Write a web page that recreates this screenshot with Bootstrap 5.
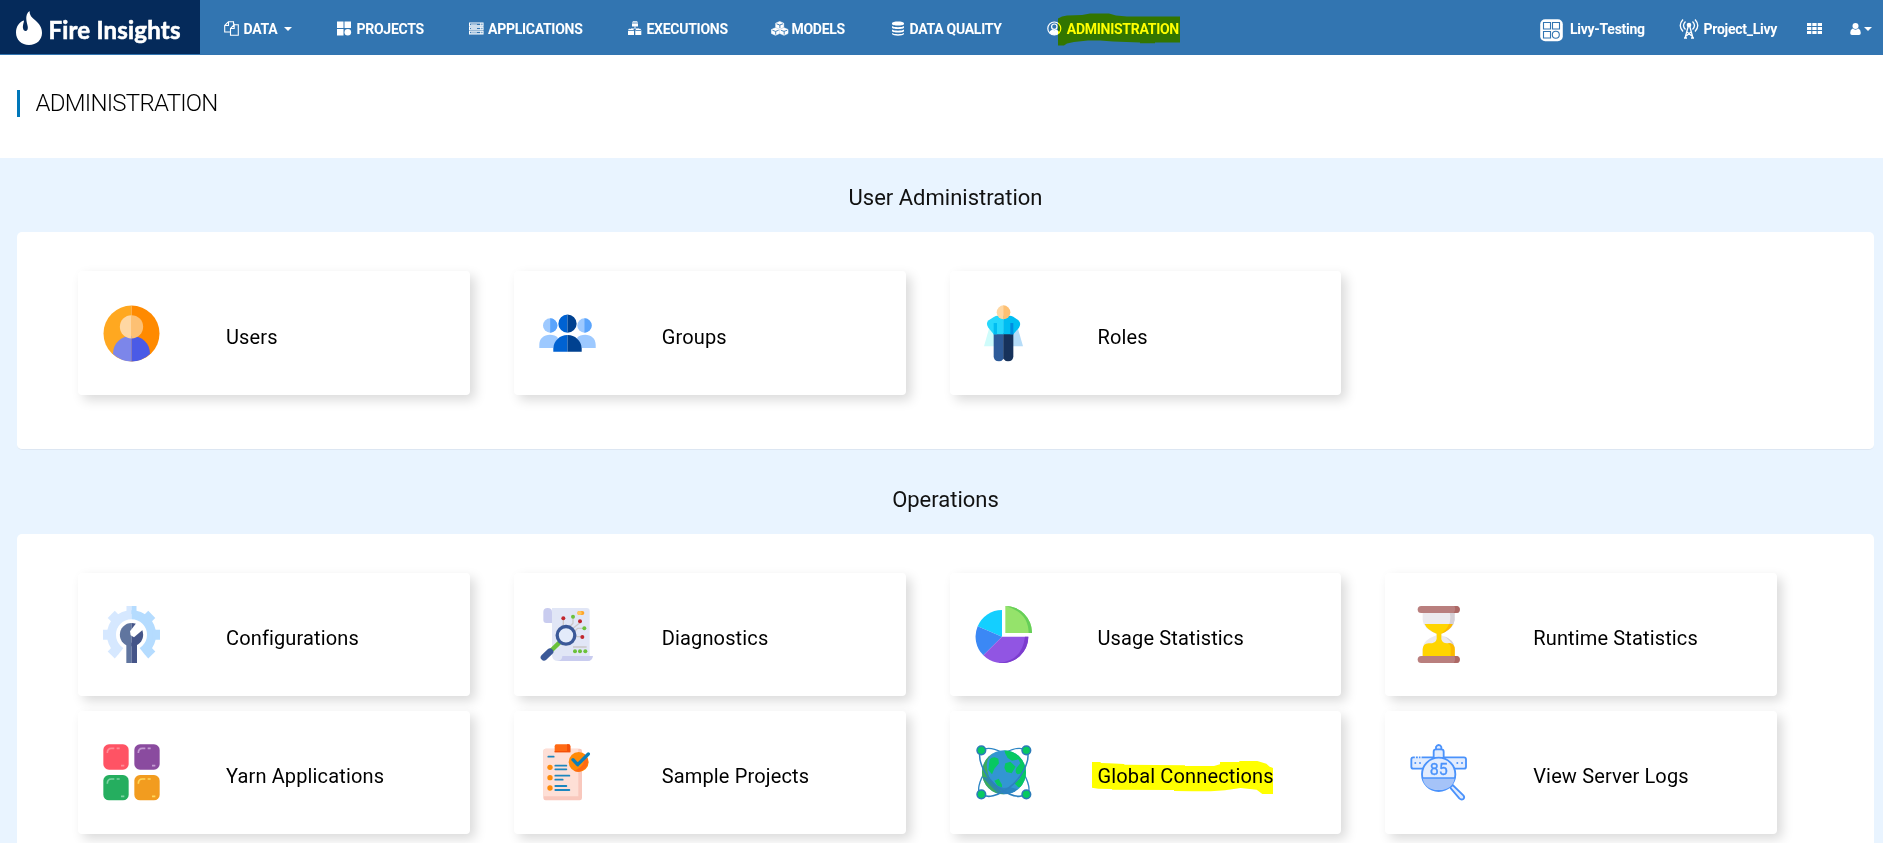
<!DOCTYPE html>
<html lang="en">
<head>
<meta charset="utf-8">
<meta name="viewport" content="width=device-width, initial-scale=1">
<title>Fire Insights - Administration</title>
<link href="https://cdn.jsdelivr.net/npm/bootstrap@5.3.0/dist/css/bootstrap.min.css" rel="stylesheet">
<style>
body{font-family:Roboto,sans-serif;background:#e9f4ff;color:#111;overflow:hidden}
svg{display:block;flex:none}
.topbar{height:55px;background:#3275b1;padding:0}
.brandbox{width:200px;height:54px;background:#052a5a;padding-left:15px;padding-top:2px;align-self:flex-start;color:#fff;text-decoration:none}
.brandname{font:700 24px/30px Lato,sans-serif;-webkit-text-stroke:.6px #fff;letter-spacing:.2px;margin-left:5.500px;margin-top:4px}
.mainmenu{display:grid;grid-template-columns:113px 131.5px 159.5px 143px 121px 155px auto;margin-left:24px;height:55px;align-items:center}
.topbar .nav-link{color:#fff;font-weight:700;font-size:14px;line-height:18px;letter-spacing:-.27px;padding:3px 0 0;display:flex;align-items:center;white-space:nowrap}
.topbar .nav-link>svg:not(.marker){fill:#fff;margin-top:-1px}
.caret{border:4px solid transparent;border-top-color:#fff;border-bottom:0;margin-left:7px}
.marker{position:absolute;mix-blend-mode:multiply;fill:#ff0;pointer-events:none}
.pagehead{height:103px;background:#fff;padding:35px 0 0 17px}
.pagehead h1{font-size:24px;font-weight:300;line-height:27px;height:27px;border-left:3px solid #0077b9;padding-left:15.500px;letter-spacing:-.75px;margin:0;color:#000}
.content{padding:0 9px 0 17px}
.content h2{font-size:22px;font-weight:400;line-height:24px;margin:0;text-align:center;padding:28px 0 22px}
.panel{background:#fff;border-radius:5px;padding:39px 97px 0 61px;border-bottom:1px solid #dce6f2}
.panel-a{height:218px}
.panel-b{height:309px;border-bottom:0;border-radius:5px 5px 0 0}
.tiles{--bs-gutter-x:44px;--bs-gutter-y:15px}
.tile{height:123px;border:0;border-radius:4px;background:#fff;box-shadow:5px 5px 12px rgba(0,0,0,.15);display:flex;flex-direction:row;align-items:center;padding-left:25px}
.panel-a .tile{height:124px;padding-top:1px}
.tile>svg{width:57px;height:57px}
.tile .cap{position:relative;font-size:20px;line-height:24px;letter-spacing:.14px;color:#000;margin:7px 0 0 66px}
</style>
</head>
<body>
<nav class="topbar navbar navbar-expand flex-nowrap justify-content-start">
  <a class="brandbox d-flex align-items-center" href="#">
    <svg width="28" height="36" viewBox="0 0 28 36"><path fill="#fff" d="M14.5 1C9.500 5 11.500 11 12.500 15.500C13.300 18.500 12.500 21 10.500 21C8.500 21 7.500 18 8 15.500C8.300 13.500 9 12 9 10.500C4.500 11.500 1 16.500 1 22.500C1 30 6.500 35 14 35C21.500 35 27 30 27 23C27 17 24 13.500 20.500 10.500C16.500 7.500 14.500 5 14.500 1Z"/></svg>
    <span class="brandname">Fire Insights</span>
  </a>
  <div class="mainmenu">
    <a class="nav-link" href="#"><svg width="19.500" height="15" viewBox="0 0 19.5 15"><path d="M4.500 3.500V.7H9.500V3.500M4.500.7L.7 4.500V11H6M4.500.7V4.500H.7M10.200 3.700H14.300V14.300H6.500V7.500L10.200 3.700V7.500H6.500" fill="none" stroke="#fff" stroke-width="1.100"/></svg>DATA<i class="caret"></i></a>
    <a class="nav-link" href="#"><svg width="19.500" height="15" viewBox="0 0 19.5 15"><path d="M0 .5H6.500V7H0zM7.500.5H14V7H7.500zM0 8H6.500V14.500H0z"/><circle cx="10.800" cy="11.200" r="3.300"/></svg>PROJECTS</a>
    <a class="nav-link" href="#"><svg width="19.500" height="13" viewBox="0 0 19.5 13"><path d="M.5 1H14V3.700H.5zM.5 5.100H14V7.800H.5zM.5 9.200H14V11.900H.5z" fill="none" stroke="#fff" stroke-width="1.100"/><path d="M2 2H8V2.800H2zM2 6.100H8V6.900H2zM2 10.200H8V11H2zM11 1H12.500V3.700H11zM11 5H12.500V7.800H11zM11 9.200H12.500V12H11z" opacity=".75"/></svg>APPLICATIONS</a>
    <a class="nav-link" href="#"><svg width="18.500" height="15" viewBox="0 0 18.5 15"><path d="M4 1.500L5 .3H9L10 1.500V5.500H4zM0 9L1 7.800H5L6 9V14H0zM7.300 9L8.300 7.800H12.300L13.300 9V14H7.300z"/><path d="M7 5V7M2 7H11.500M4 2H10M0 9.500H6M7.300 9.500H13.300" stroke="#3275b1" stroke-width=".8"/><path d="M6.500 5H7.500V7H11V7.600H3V7H6.500z"/></svg>EXECUTIONS</a>
    <a class="nav-link" href="#"><svg width="20.500" height="15" viewBox="0 0 20.5 15"><g stroke="#fff" stroke-width=".6" stroke-linejoin="round"><path d="M8.700.5L12.700 2.200V6.200L8.700 8L4.700 6.200V2.200zM4.500 6.800L8.500 8.500V12.500L4.500 14.300L.5 12.500V8.500zM13 6.800L17 8.500V12.500L13 14.300L9 12.500V8.500z"/></g><path d="M5.500 2.800L8.700 4L12 2.800M8.900 4V7M1.400 9.200L4.500 10.400L7.700 9.200M4.700 10.400V13.500M9.900 9.200L13 10.400L16.200 9.200M13.200 10.400V13.500" fill="none" stroke="#3275b1" stroke-width=".9"/></svg>MODELS</a>
    <a class="nav-link" href="#"><svg width="17.500" height="15" viewBox="0 0 17.5 15"><path d="M0 2.300C0-.2 12 -.2 12 2.300V3C12 5 0 5 0 3zM0 5C2 6.600 10 6.600 12 5V6.500C12 8.500 0 8.500 0 6.500zM0 8.500C2 10.100 10 10.100 12 8.500V10C12 12 0 12 0 10zM0 12C2 13.600 10 13.600 12 12V13C11 15.300 1 15.300 0 13z"/></svg>DATA QUALITY</a>
    <a class="nav-link position-relative" href="#"><svg width="19.800" height="15" viewBox="0 0 19.8 15"><circle cx="7.300" cy="7.500" r="6.500" fill="none" stroke="#fff" stroke-width="1.200"/><circle cx="7.300" cy="5.700" r="2.700" fill="none" stroke="#fff" stroke-width="1.200"/><path d="M2.300 11.500C3 9.500 4.500 9.200 5.300 8.500Q7.300 10 9.300 8.500C10 9.200 11.600 9.500 12.300 11.500Q7.300 16.500 2.300 11.500z"/></svg>ADMINISTRATION
      <svg class="marker" style="left:11px;top:-4px" width="123" height="33" viewBox="1058 13.500 123 33"><path d="M1058 19L1062 17L1067 16L1082 15.500L1090 14H1109L1116 16L1127 17H1180V43H1155V43.700H1140V43L1113 42L1100 41H1088L1074 42.500L1067 44L1064 46H1058z"/></svg></a>
  </div>
  <div class="d-flex ms-auto align-items-center" style="height:55px">
    <a class="nav-link" style="width:139px" href="#"><svg width="30" height="23" viewBox="0 0 30 23" style="margin-top:3px"><rect x=".2" y=".2" width="22.600" height="22" rx="5"/><g fill="none" stroke="#3275b1" stroke-width="1.100"><path d="M3.500 3.500H10.500V10H3.500zM12.500 3.500H19.500V10H12.500zM3.500 12.500H10.500V19H3.500z"/><circle cx="15.800" cy="15.700" r="3.500"/></g></svg>Livy-Testing</a>
    <a class="nav-link" style="width:128px" href="#"><svg width="24.500" height="21" viewBox="0 0 24.5 21"><path d="M4 1.500Q-1.500 7.500 4 13.500M16 1.500Q21.500 7.500 16 13.500M6.500 3.500Q2.500 7.500 6.500 11.500M13.500 3.500Q17.500 7.500 13.500 11.500M9.300 8L6.200 19.500M10.700 8L13.800 19.500M8 14L13.500 18.500M12 14L6.500 18.500M5 20H8M12 20H15" fill="none" stroke="#fff" stroke-width="1.300"/><circle cx="10" cy="7" r="2.300"/></svg>Project_Livy</a>
    <a class="nav-link" style="width:43px" href="#"><svg width="15" height="11" viewBox="0 0 15 11"><path d="M0 0H4.300V3H0zM5.300 0H9.600V3H5.300zM10.700 0H15V3H10.700zM0 4H4.300V7H0zM5.300 4H9.600V7H5.300zM10.700 4H15V7H10.700zM0 8H4.300V11H0zM5.300 8H9.600V11H5.300zM10.700 8H15V11H10.700z"/></svg></a>
    <a class="nav-link" style="width:33px" href="#"><svg width="11" height="12" viewBox="0 0 11 12"><circle cx="5.500" cy="3" r="3"/><path d="M2.500 5.500Q5.500 7.800 8.500 5.500Q10.800 6.500 10.800 10Q10.800 12 9 12H2Q.2 12 .2 10Q.2 6.500 2.500 5.500z"/></svg><i class="caret" style="margin-left:2.500px"></i></a>
  </div>
</nav>

<header class="pagehead"><h1>ADMINISTRATION</h1></header>

<main class="content">
  <h2>User Administration</h2>
  <section class="panel panel-a">
    <div class="row tiles">
      <div class="col-3"><div class="card tile">
        <svg viewBox="0 0 57 57"><path fill="#ffa820" d="M28.500.5A28 28 0 0 0 28.500 56.500z"/><path fill="#ff8a00" d="M28.500.5A28 28 0 0 1 28.500 56.500z"/><path fill="#7c86ea" d="M28.500 31C18 31 10 38 10 49A28 28 0 0 0 28.500 56.500z"/><path fill="#4a5ae6" d="M28.500 31C39 31 47 38 47 49A28 28 0 0 1 28.500 56.500z"/><path fill="#fed7a3" d="M28.500 10.200A11.600 11.600 0 0 0 28.500 33.500z"/><path fill="#fdc073" d="M28.500 10.200A11.600 11.600 0 0 1 28.500 33.500z"/></svg>
        <span class="cap">Users</span></div></div>
      <div class="col-3"><div class="card tile">
        <svg viewBox="0 0 57 57"><g fill="#9dc9ff"><path d="M.3 43V40C.3 33.500 5 29.800 10.800 29.800C14 29.800 17.500 31 19 33L14 43zM56.700 43V40C56.700 33.500 52 29.800 46.200 29.800C43 29.800 39.500 31 38 33L43 43z"/><circle cx="11.200" cy="20.500" r="7.200"/><circle cx="45.500" cy="20.500" r="7.200"/></g><path fill="#5aa4fc" d="M11.200 13.300A7.200 7.200 0 0 1 11.200 27.700zM45.500 13.300A7.200 7.200 0 0 1 45.500 27.700z"/><path fill="#0062d2" d="M28.500 9.500A9 9 0 0 0 28.500 27.800zM28.500 30A14 14 0 0 0 14.300 43V46.700H28.500z"/><path fill="#004190" d="M28.500 9.500A9 9 0 0 1 28.500 27.800zM28.500 30A14 14 0 0 1 42.700 43V46.700H28.500z"/></svg>
        <span class="cap">Groups</span></div></div>
      <div class="col-3"><div class="card tile">
        <svg viewBox="225 134 171 171"><path fill="#cffcfb" d="M267 205L252 258H290V205z"/><path fill="#b6dcf8" d="M354 205L369 258H330V205z"/><path fill="#2e5b99" d="M281 218H311V295Q305 303 297 303Q281 303 281 288z"/><path fill="#17325b" d="M340 218H310V295Q316 303 324 303Q340 303 340 288z"/><path fill="#26d8fc" d="M311 166H292Q284 166 266 180Q256 189 265 202L281 222H311z"/><path fill="#00bdf2" d="M310 166H330Q338 166 355 180Q365 189 357 202L340 222H310z"/><path fill="#00bdf2" d="M281 188H291V222H281z"/><path fill="#008de0" d="M331 188H340V222H331z"/><path fill="#fed7a3" d="M311 135A21 21 0 0 0 311 177z"/><path fill="#fdc073" d="M310 135A21 21 0 0 1 310 177z"/></svg>
        <span class="cap">Roles</span></div></div>
    </div>
  </section>

  <h2 style="padding-top:38px">Operations</h2>
  <section class="panel panel-b">
    <div class="row tiles">
      <div class="col-3"><div class="card tile">
        <svg viewBox="-1 0 171 171"><defs><clipPath id="gl"><path d="M-1 0H84.500V171H-1z"/></clipPath><clipPath id="gr"><path d="M84.500 0H171V171H84.500z"/></clipPath>
        <g id="gear"><circle cx="84.500" cy="86" r="60" fill="none" stroke-width="27"/><g stroke="none"><path d="M69.500 0h30v24h-30z"/><path transform="rotate(90 84.500 86)" d="M69.500 0h30v24h-30z"/><path transform="rotate(-90 84.500 86)" d="M69.500 0h30v24h-30z"/><path transform="rotate(45 84.500 86)" d="M69.500 0h30v24h-30z"/><path transform="rotate(-45 84.500 86)" d="M69.500 0h30v24h-30z"/><path transform="rotate(135 84.500 86)" d="M69.500 0h30v24h-30z"/><path transform="rotate(-135 84.500 86)" d="M69.500 0h30v24h-30z"/></g></g></defs>
        <use href="#gear" fill="#d6e8ff" stroke="#d6e8ff" clip-path="url(#gl)"/><use href="#gear" fill="#b5dcff" stroke="#b5dcff" clip-path="url(#gr)"/>
        <path fill="#fff" d="M62 124L36 157V171H133V157L107 124L84.500 100z"/><g clip-path="url(#gl)" fill="#60759f"><circle cx="84.500" cy="86" r="35"/><path d="M69 110H101V171H69z"/></g><g clip-path="url(#gr)" fill="#455588"><circle cx="84.500" cy="86" r="35"/><path d="M69 110H101V171H69z"/></g><path fill="#fff" d="M103 46L80 76L82 88L92 94L122 68z"/></svg>
        <span class="cap">Configurations</span></div></div>
      <div class="col-3"><div class="card tile">
        <svg viewBox="0 0 171 171"><path fill="#e1e6f6" d="M26 6H143Q152 6 152 16V165H55Q39 165 39 145V6z"/><path fill="#c9ccef" d="M13 18Q13 6 26 6Q39 6 39 18V51H22Q13 51 13 42zM70 150H162Q160 165 146 165H55Q70 163 70 150z"/><g fill="none" stroke="#ccc9ca" stroke-width="4"><path d="M73 41V60M102 36V52L92 62M123 50L103 66M132 67H116L107 76M126 92H110"/></g><path stroke="#ccc9ca" stroke-width="5" d="M102 123H143"/><g fill="#c1272d"><circle cx="73" cy="37" r="6"/><circle cx="123" cy="46" r="6"/><circle cx="130" cy="93" r="6"/></g><g fill="#6bc13b"><circle cx="102" cy="32" r="6"/><circle cx="136" cy="67" r="6"/><circle cx="108" cy="136" r="6"/><circle cx="123" cy="136" r="6"/><circle cx="139" cy="136" r="6"/></g><rect x="115" y="15" width="21" height="12" rx="6" fill="#ffa52c"/><rect x="115" y="15" width="13" height="12" rx="5" fill="#ffc65c"/><path stroke="#6bc13b" stroke-width="13" d="M65 106L34 136"/><path stroke="#3b5998" stroke-width="20" stroke-linecap="round" d="M33 137L15 154"/><circle cx="81" cy="88" r="26.500" fill="#e3ebfa" stroke="#3b5998" stroke-width="10"/></svg>
        <span class="cap">Diagnostics</span></div></div>
      <div class="col-3"><div class="card tile">
        <svg viewBox="134 138 171 171"><path fill="#14cfff" d="M215 230V150A79 79 0 0 0 142 199z"/><path fill="#3b88f5" d="M215 230L142 199A79 79 0 0 0 159 286z"/><path fill="#9155e3" d="M215 230L159 286A79 79 0 0 0 294 230z"/><path fill="#7c3dce" d="M284 230H294A79 79 0 0 1 205 308.500Q275 303 284 230z"/><path fill="#95e36b" d="M225 138A80 80 0 0 1 305 219H225z"/><path fill="#66cf58" d="M225 138A80 80 0 0 1 305 219H295Q294 155 225 138z"/></svg>
        <span class="cap">Usage Statistics</span></div></div>
      <div class="col-3"><div class="card tile">
        <svg viewBox="121 138 171 171"><path fill="#eceaee" d="M159 155H255V180Q252 205 215 222V226Q255 240 255 265V290H159V265Q160 240 200 226V222Q160 205 159 180z"/><path fill="#d6d0d6" d="M240 155H255V180Q252 205 222 219Q242 200 242 170zM222 228Q255 240 255 265Q243 240 222 228z"/><path fill="#ffd500" d="M165 192H249Q242 210 215 221V238Q218 250 232 250H242Q255 254 255 268V290H159V268Q160 250 177 250Q200 250 201 236V221Q172 210 165 192z"/><path fill="#fcb900" d="M238 192H249Q242 210 215 221Q232 208 238 192zM234 250H242Q255 254 255 268V290H243V264Q243 254 234 250z"/><rect x="144" y="138" width="126" height="21" rx="10.500" fill="#b97f7e"/><rect x="144" y="288" width="126" height="21" rx="10.500" fill="#b97f7e"/><path fill="#ad6865" d="M254 138H260A10.500 10.500 0 0 1 260 159H252Q260 149 254 138zM254 288H260A10.500 10.500 0 0 1 260 309H252Q260 299 254 288z"/></svg>
        <span class="cap">Runtime Statistics</span></div></div>

      <div class="col-3"><div class="card tile">
        <svg viewBox="-1 -1 171 171"><rect width="76" height="76" rx="17" fill="#ff5364"/><rect x="93" width="76" height="76" rx="17" fill="#8a4b9f"/><rect y="92" width="76" height="76" rx="17" fill="#25ae5f"/><rect x="93" y="92" width="76" height="76" rx="17" fill="#f29c1f"/><g fill="none" stroke-width="5"><path stroke="#ff8b95" d="M12 26Q12 12 24 12H33M40 12H49M53 64H63"/><path stroke="#c49bd2" d="M105 26Q105 12 117 12H126M133 12H142M146 64H156"/><path stroke="#7ed3a3" d="M12 118Q12 104 24 104H33M40 104H49M53 156H63"/><path stroke="#ffd75c" d="M105 118Q105 104 117 104H126M133 104H142M146 156H156"/></g></svg>
        <span class="cap">Yarn Applications</span></div></div>
      <div class="col-3"><div class="card tile">
        <svg viewBox="0 -1 171 171"><rect x="13" y="13" width="116" height="155" rx="7" fill="#f9c8bd"/><path fill="#fedfd6" d="M20 13H118V156H13V20Q13 13 20 13z"/><path fill="#ff6a14" d="M52 0H89Q94 0 94 6V24H47V6Q47 0 52 0z"/><path fill="#f4500a" d="M84 0H89Q94 0 94 6V24H47V20H84z"/><g fill="#ff8a08"><circle cx="33" cy="69" r="8"/><circle cx="33" cy="100" r="8"/><circle cx="33" cy="131" r="8"/><circle cx="119" cy="53" r="30"/></g><path fill="#ff6a14" d="M135 28A30 30 0 0 1 104 79Q143 68 135 28z"/><path fill="none" stroke="#1c87bf" stroke-width="5.500" stroke-linecap="round" d="M28 37H44M49 64H82M49 75H82M49 94H91M49 106H71M49 125H82M49 137H91"/><path fill="none" stroke="#0c7fb9" stroke-width="10" stroke-linecap="round" stroke-linejoin="round" d="M102 46L116 61L148 29"/></svg>
        <span class="cap">Sample Projects</span></div></div>
      <div class="col-3"><div class="card tile">
        <svg viewBox="134 554 171 171"><defs><clipPath id="world"><circle cx="221" cy="639" r="66"/></clipPath></defs><g fill="none" stroke="#2d86c5" stroke-width="4"><path d="M153 573C185 553 245 590 272 630C298 668 302 700 288 705"/><path d="M288 573C256 553 196 590 169 630C143 668 139 700 153 705"/></g>
        <g clip-path="url(#world)"><path fill="#3296d2" d="M150 570H290V708H150z"/><path fill="#3cac5d" d="M150 573H200Q165 592 170 625Q172 650 185 668L205 690L225 708H150z"/><path fill="#07c862" d="M178 600Q190 588 204 598L206 612L192 628L185 645L174 632zM222 573H245L290 600V680L264 684L252 672L268 658L275 642L262 645Q252 640 258 626L270 612L264 600L245 604L232 596L225 583zM225 612L240 607L256 622L244 642L228 638L222 625z"/><path fill="#07c862" d="M192 664L205 658L215 676V684L202 680z"/><path fill="#2a7fbd" d="M155 652L175 655L200 680L220 686L240 684L262 690L240 708L200 700z" opacity=".75"/></g>
        <g fill="none" stroke="#2d80c0" stroke-width="4.500"><path d="M149 580C143 605 165 655 205 685C240 711 270 716 288 705M292 580C298 605 276 655 236 685C201 711 171 716 153 705"/></g><g fill="#07c862" stroke="#2a7ab9" stroke-width="4.500"><circle cx="153" cy="573" r="13"/><circle cx="288" cy="573" r="13"/><circle cx="153" cy="705" r="13"/><circle cx="288" cy="705" r="13"/></g></svg>
        <span class="cap">Global Connections<svg class="marker" style="left:-5.300px;top:-3px" width="181" height="33" viewBox="489 603 543 99"><path d="M489 606H515V609L540 610L585 612L587 614L768 616V618H855L873 613V606H930L932 603H985L1012 611L1022 620L1032 624V702H1000L983 689L935 684L888 691L845 694H790L735 693V690L550 689L548 687L508 686L489 683z"/></svg></span></div></div>
      <div class="col-3"><div class="card tile">
        <svg viewBox="121 554 171 171"><g stroke="#4a92fb" stroke-width="5.500" fill="#e2ecfe" stroke-linejoin="round"><path d="M131 594H283Q289 594 289 600V622Q289 628 283 628H131Q125 628 125 622V600Q125 594 131 594z"/><path d="M192 596V577Q192 570 199 570V563Q202 557 207 557Q213 557 215 563V570Q222 570 222 577V596z"/><path d="M241 684L249 677L281 708Q286 714 281 719Q275 723 269 717z"/><circle cx="207" cy="645" r="50"/></g><path fill="#a5c3f8" d="M159 656H255Q250 692 207 692Q164 692 159 656z"/><path fill="none" stroke="#4a92fb" stroke-width="5" d="M158 656H256M199 570H215"/><g fill="#4a92fb"><circle cx="137" cy="611" r="3"/><circle cx="151" cy="611" r="3"/><circle cx="263" cy="611" r="3"/><circle cx="277" cy="611" r="3"/></g><path stroke="#fff" stroke-width="3" d="M137 590V598M146 590V598M154 590V598"/><text x="207" y="646" text-anchor="middle" font-family="Roboto,sans-serif" font-size="51" font-weight="400" fill="#4a92fb" stroke="#4a92fb" textLength="54" lengthAdjust="spacingAndGlyphs">85</text></svg>
        <span class="cap">View Server Logs</span></div></div>
    </div>
  </section>
</main>
<script src="https://cdn.jsdelivr.net/npm/bootstrap@5.3.0/dist/js/bootstrap.bundle.min.js"></script>
</body>
</html>
